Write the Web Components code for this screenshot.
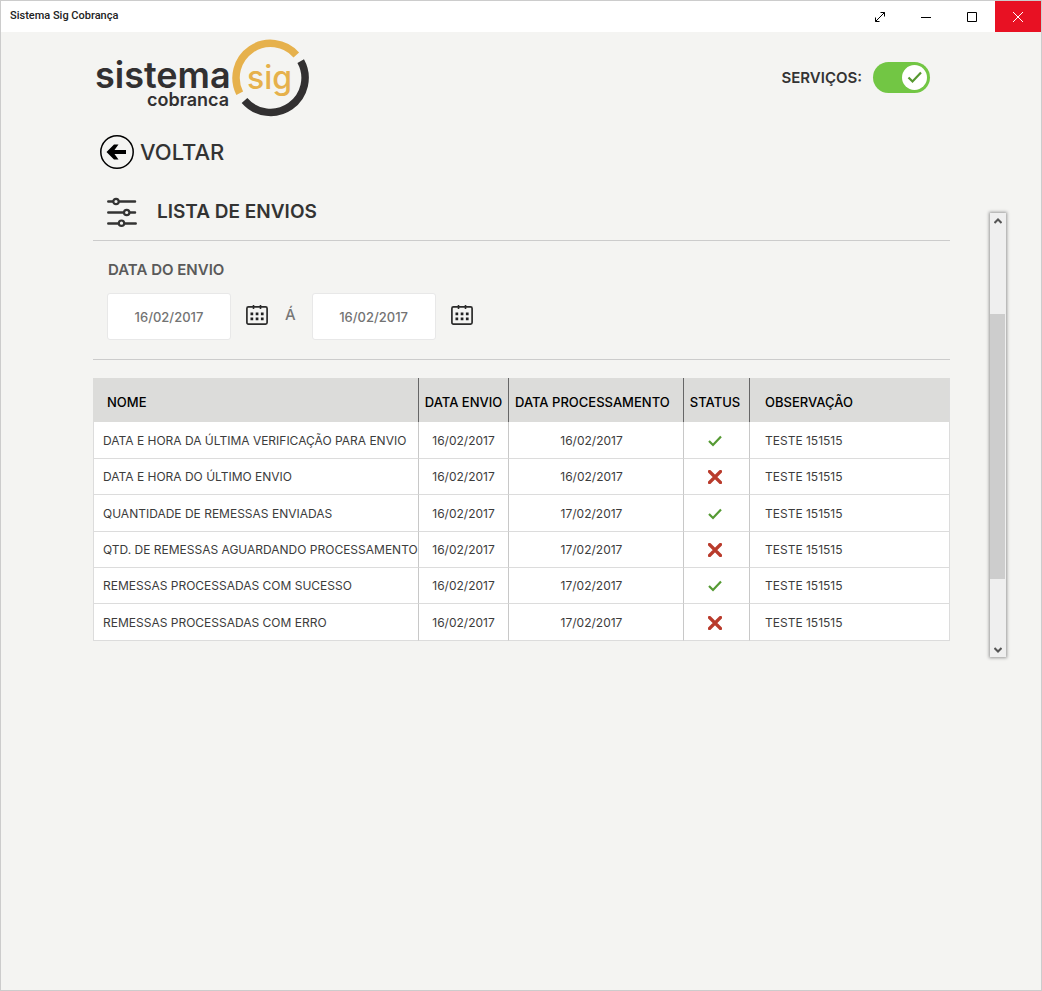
<!DOCTYPE html>
<html lang="pt-BR">
<head>
<meta charset="utf-8">
<title>Sistema Sig Cobrança</title>
<style>
  html, body { height: 100%; margin: 0; }
  body { font-family: Inter, "Liberation Sans", sans-serif; background: #f4f4f2; color: #333; }
</style>
</head>
<body>
<app-window>
  <title-bar slot="bar">Sistema Sig Cobrança</title-bar>
  <brand-logo slot="logo"></brand-logo>
  <service-toggle slot="toggle">SERVIÇOS:</service-toggle>
  <back-link slot="back">VOLTAR</back-link>
  <section-heading>LISTA DE ENVIOS</section-heading>
  <date-filter></date-filter>
  <envios-table></envios-table>
  <scroll-rail slot="rail"></scroll-rail>
</app-window>

<script>
const define = (name, html) => customElements.define(name, class extends HTMLElement {
  constructor() {
    super();
    const t = document.createElement('template');
    t.innerHTML = html;
    this.attachShadow({ mode: 'open' }).append(t.content.cloneNode(true));
  }
});

define('app-window', `
<style>
  :host { display: flex; flex-direction: column; box-sizing: border-box; min-height: 100%; border: 1px solid #ccc; }
  main { display: grid; grid-template-columns: 92px minmax(0, 1fr) 91px; }
  header { grid-column: 2; display: flex; justify-content: space-between; align-items: center; padding: 6px 20px 0 0; }
  nav { grid-column: 2; padding: 17px 0 0 6px; }
  section { grid-column: 2; padding: 27px 0 16px; }
  aside { grid-column: 3; display: flex; padding: 43px 0 0 40px; }
</style>
<slot name="bar"></slot>
<main>
  <header><slot name="logo"></slot><slot name="toggle"></slot></header>
  <nav><slot name="back"></slot></nav>
  <section><slot></slot></section>
  <aside><slot name="rail"></slot></aside>
</main>`);

define('title-bar', `
<style>
  :host { display: flex; height: 31px; background: #fff; }
  h1 { flex: 1; margin: 0; padding-left: 9px; font: 500 11px/30px Roboto, sans-serif; color: #222; }
  button { width: 46px; height: 31px; padding: 0; border: 0; background: none; color: #000; display: grid; place-items: center; }
  .close { background: #e81123; color: #fff; }
  svg { display: block; fill: none; stroke: currentColor; }
</style>
<h1><slot></slot></h1>
<button aria-label="Expandir"><svg width="12" height="12" viewBox="0 0 12 12"><path d="M1.5 10.5l9-9M6.5 1.5h4v4M1.5 6.500v4h4"/></svg></button>
<button aria-label="Minimizar"><svg width="10" height="10" viewBox="0 0 10 10"><path d="M0 5.500h10"/></svg></button>
<button aria-label="Maximizar"><svg width="10" height="10" viewBox="0 0 10 10"><path d="M.5.500h9v9h-9z"/></svg></button>
<button class="close" aria-label="Fechar"><svg width="10" height="10" viewBox="0 0 10 10"><path d="M0 0l10 10M10 0L0 10"/></svg></button>`);

define('brand-logo', `
<style>
  :host { display: block; }
  svg { display: block; font-family: Inter, sans-serif; }
</style>
<svg width="220" height="79" viewBox="93 38 220 79" role="img" aria-label="Sistema Sig Cobrança">
  <g fill="none" stroke-width="7.500">
    <path stroke="#e6b14c" d="M239.700 93.300A34.500 34.500 0 0 1 296.300 54.900"/>
    <path stroke="#323031" d="M300.700 61.100A34.500 34.500 0 0 1 244.500 100.500"/>
  </g>
  <text font-weight="600" fill="#323031"><tspan x="95" y="88" font-size="36">sistema</tspan><tspan x="147" y="106" font-size="18">cobranca</tspan></text>
  <text x="247" y="89" font-size="32" font-weight="500" fill="#e6b14c">sig</text>
</svg>`);

define('service-toggle', `
<style>
  :host { display: block; }
  label { display: flex; align-items: center; gap: 11px; font-size: 15px; font-weight: 600; line-height: 20px; color: #333; }
  .track { display: grid; align-items: center; width: 57px; height: 31px; }
  .track > * { grid-area: 1 / 1; }
  input { appearance: none; margin: 0; width: 57px; height: 31px; border-radius: 16px; background: #bbb; }
  input:checked { background: #72c644; }
  svg { justify-self: start; margin-left: 3px; pointer-events: none; }
  input:checked + svg { justify-self: end; margin: 0 3px 0 0; }
</style>
<label><slot></slot><span class="track"><input type="checkbox" role="switch" checked>
<svg width="25" height="25" viewBox="0 0 25 25"><circle cx="12.500" cy="12.500" r="12.500" fill="#fff"/><path d="M6.500 12.500l4 4 8.500-9" fill="none" stroke="#55972f" stroke-width="2.200"/></svg></span></label>`);

define('back-link', `
<style>
  :host { display: block; }
  a { display: inline-flex; align-items: center; gap: 5px; height: 36px; font-size: 22px; font-weight: 500; line-height: 28px; color: #333; text-decoration: none; vertical-align: top; }
</style>
<a href="#"><svg width="36" height="36" viewBox="0 0 36 36" fill="none" stroke="#000"><circle cx="18" cy="18" r="16.200" stroke-width="1.500"/><path d="M27 18H11" stroke-width="4"/><path d="M7.500 18L15 10.500h4.500L14 18l5.500 7.500H15z" fill="#000" stroke="none"/></svg><slot></slot></a>`);

define('section-heading', `
<style>
  :host { display: block; padding: 0 0 13px 14px; border-bottom: 1px solid #ccc; }
  h2 { display: flex; align-items: center; gap: 20px; height: 30px; margin: 0; font-size: 19px; font-weight: 600; line-height: 28px; color: #333; }
</style>
<h2><svg width="30" height="30" viewBox="0 0 30 30" fill="none" stroke="#333" stroke-width="2.500" stroke-linecap="round"><path d="M1.300 4.500h4.500M12 4.500h16M1.300 15.500h15.500M23 15.500h5M1.300 26.500h10M18 26.500h10.700"/><g fill="#f4f4f2" stroke-width="2.200"><circle cx="9" cy="4.500" r="2.700"/><circle cx="19.700" cy="15.500" r="2.700"/><circle cx="14.500" cy="26.200" r="2.700"/></g></svg><slot></slot></h2>`);

const calendar = `<svg width="22" height="22" viewBox="0 0 22 22" fill="none" stroke="#2b2b2b"><rect x=".9" y="2.900" width="20.200" height="17.200" rx="1.500" stroke-width="1.700"/><path d="M7.500 1v4M14.500 1v4" stroke-width="1.600"/><g fill="#222" stroke="none"><path d="M4.500 8.500h2.700v2.700h-2.700zM9.700 8.500h2.700v2.700h-2.700zM14.900 8.500h2.700v2.700h-2.700zM4.500 13.500h2.700v2.700h-2.700zM9.700 13.500h2.700v2.700h-2.700zM14.900 13.500h2.700v2.700h-2.700z"/></g></svg>`;

define('date-filter', `
<style>
  :host { display: block; padding: 19px 0 19px 14px; border-bottom: 1px solid #ccc; }
  .title { display: block; margin: 0 0 13px 1px; font-size: 15px; font-weight: 600; line-height: 20px; color: #5a5a5a; }
  .row { display: flex; align-items: center; }
  input { box-sizing: border-box; width: 124px; height: 47px; margin: 0; padding: 0; border: 1px solid #e8e8e8; border-radius: 3px; background: #fff; font: 500 13px/18px Inter, sans-serif; color: #737373; text-align: center; }
  button { padding: 0 0 3px; margin: 0 17px 0 15px; border: 0; background: none; }
  svg { display: block; }
  .to { margin-right: 16px; padding-bottom: 3px; font-size: 15px; font-weight: 500; line-height: 20px; color: #777; }
</style>
<label class="title" for="from">DATA DO ENVIO</label>
<div class="row">
  <input id="from" type="text" value="16/02/2017"><button aria-label="Abrir calendário inicial">${calendar}</button>
  <label class="to" for="to">Á</label>
  <input id="to" type="text" value="16/02/2017"><button aria-label="Abrir calendário final">${calendar}</button>
</div>`);

define('status-icon', `
<style>
  :host { display: block; }
  svg { display: block; margin: auto; fill: none; }
  .bad, :host([error]) .ok { display: none; }
  :host([error]) .bad { display: block; }
</style>
<svg class="ok" role="img" aria-label="Sucesso" width="14" height="14" viewBox="0 0 14 14"><path d="M1 7l4 4 8-8.500" stroke="#559a33" stroke-width="2.200"/></svg>
<svg class="bad" role="img" aria-label="Erro" width="14" height="14" viewBox="0 0 14 14"><path d="M1.500 1.500l11 11M12.500 1.500l-11 11" stroke="#b93b2c" stroke-width="3.200" stroke-linecap="round"/></svg>`);

const rows = [
  ['DATA E HORA DA ÚLTIMA VERIFICAÇÃO PARA ENVIO', '16/02/2017', true],
  ['DATA E HORA DO ÚLTIMO ENVIO', '16/02/2017', false],
  ['QUANTIDADE DE REMESSAS ENVIADAS', '17/02/2017', true],
  ['QTD. DE REMESSAS AGUARDANDO PROCESSAMENTO', '17/02/2017', false],
  ['REMESSAS PROCESSADAS COM SUCESSO', '17/02/2017', true],
  ['REMESSAS PROCESSADAS COM ERRO', '17/02/2017', false]
];

define('envios-table', `
<style>
  :host { display: block; margin-top: 18px; }
  table { width: 100%; table-layout: fixed; border-collapse: separate; border-spacing: 0; background: #fff; font-size: 12px; font-weight: 400; line-height: 16px; color: #3c3c3c; }
  th, td { box-sizing: border-box; padding: 1px 0 0; white-space: nowrap; text-align: center; border-right: 1px solid #c8c8c8; border-bottom: 1px solid #dcdcdc; }
  th { height: 44px; padding-top: 3px; background: #dcdcda; font-size: 13px; font-weight: 500; color: #000; border-right-color: #666; border-bottom: 0; }
  td { height: 36px; }
  tr:first-child td, tr:nth-child(3n) td { height: 37px; }
  td:first-child { text-align: left; padding-left: 9px; border-left: 1px solid #dcdcdc; }
  th:first-child { text-align: left; padding-left: 14px; }
  th:nth-child(3) { text-align: left; padding-left: 6px; }
  td:nth-child(3) { padding-right: 9px; }
  td:nth-child(4), th:nth-child(4) { padding-right: 3px; }
  td:last-child, th:last-child { text-align: left; padding-left: 15px; border-right-color: #dcdcdc; }
  .name { width: 326px; } .sent { width: 90px; } .done { width: 175px; } .status { width: 66px; }
</style>
<table>
  <colgroup><col class="name"><col class="sent"><col class="done"><col class="status"><col></colgroup>
  <thead><tr><th scope="col">NOME</th><th scope="col">DATA ENVIO</th><th scope="col">DATA PROCESSAMENTO</th><th scope="col">STATUS</th><th scope="col">OBSERVAÇÃO</th></tr></thead>
  <tbody>${rows.map(([name, done, ok]) => `<tr><td>${name}</td><td>16/02/2017</td><td>${done}</td><td><status-icon${ok ? '' : ' error'}></status-icon></td><td>TESTE 151515</td></tr>`).join('')}</tbody>
</table>`);

define('scroll-rail', `
<style>
  :host { display: flex; flex-direction: column; width: 16px; background: #efefef; box-shadow: 0 0 3px 1px #999; }
  button { height: 15px; padding: 0; border: 0; background: none; display: grid; place-items: center; }
  svg { display: block; fill: none; stroke: #555; stroke-width: 2; }
  .track { flex: 1; display: flex; flex-direction: column; }
  .before { flex: 86; } .thumb { flex: 265; background: #cdcdcd; margin-right: 1px; } .after { flex: 63; }
</style>
<button aria-label="Rolar para cima"><svg width="8" height="6" viewBox="0 0 8 6"><path d="M.5 5L4 1.500 7.500 5"/></svg></button>
<div class="track"><div class="before"></div><div class="thumb"></div><div class="after"></div></div>
<button aria-label="Rolar para baixo"><svg width="8" height="6" viewBox="0 0 8 6"><path d="M.5 1L4 4.500 7.500 1"/></svg></button>`);
</script>
</body>
</html>
